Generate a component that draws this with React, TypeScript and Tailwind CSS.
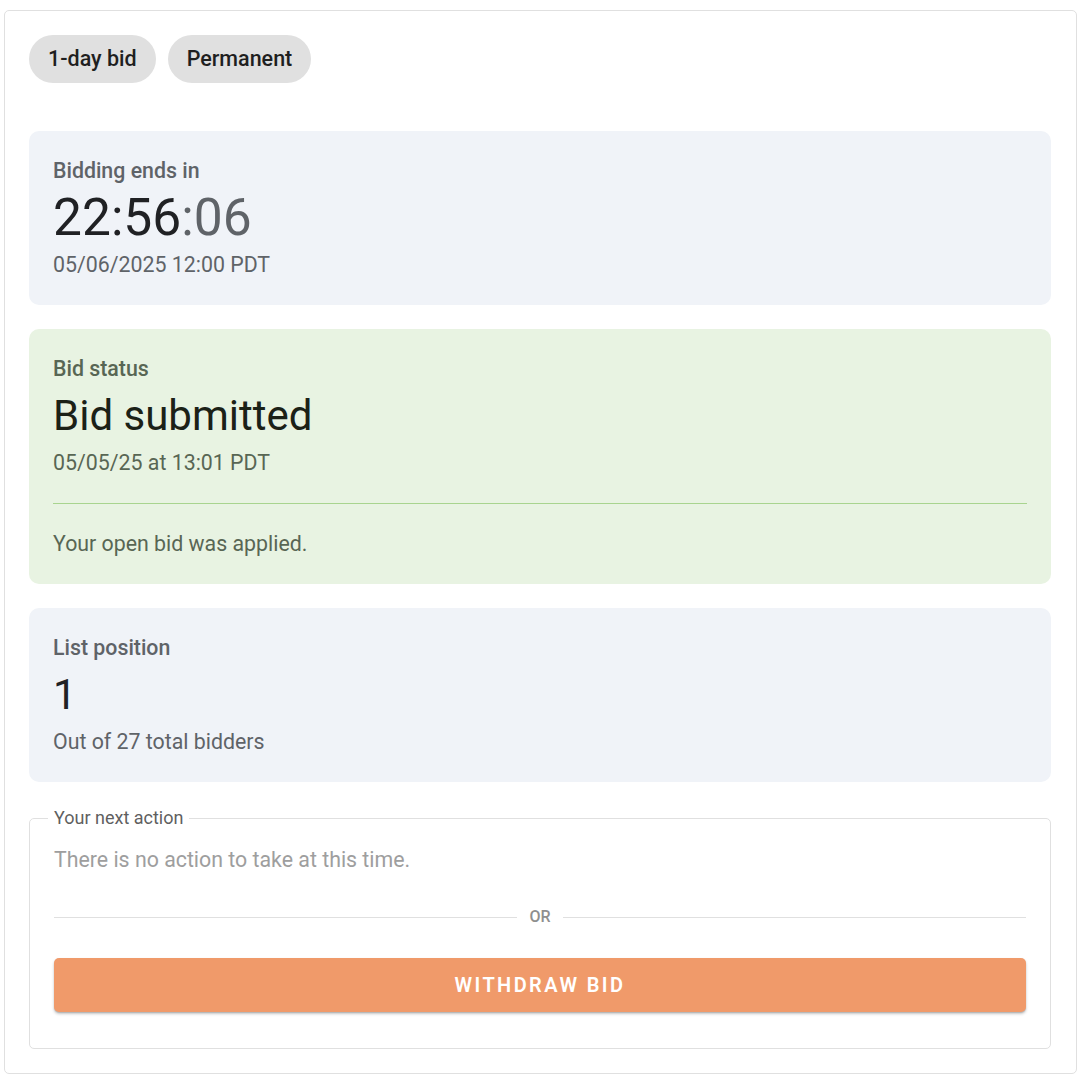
import React from 'react';

const font = { fontFamily: 'Roboto, "Noto Sans", Arial, sans-serif' };

function Chip({ label }: { label: string }) {
  return (
    <span className="inline-flex h-12 items-center rounded-full bg-[#e0e0e0] px-[19px] text-[21.5px] font-medium text-[#1f1f1f]">
      {label}
    </span>
  );
}

export default function App() {
  return (
    <div className="min-h-screen bg-white pt-[10px] px-[4px]" style={font}>
      <div className="rounded-[5px] border border-[#e0e0e0] pl-6 pr-[25px] py-6">
        <div className="flex gap-3">
          <Chip label="1-day bid" />
          <Chip label="Permanent" />
        </div>

        <div className="mt-12 flex flex-col gap-6">
          <section className="rounded-[10px] bg-[#f0f3f8] p-6">
            <div className="text-[21.33px] font-medium leading-[32px] text-[#5f6368]">Bidding ends in</div>
            <div className="text-[51.5px] leading-[62px] text-[#202124]">
              22:56<span className="text-[#5f6368]">:06</span>
            </div>
            <div className="text-[21.33px] leading-[32px] text-[#5f6368]">05/06/2025 12:00 PDT</div>
          </section>

          <section className="rounded-[10px] bg-[#e8f3e2] p-6">
            <div className="text-[21.33px] font-medium leading-[32px] text-[#586654]">Bid status</div>
            <div className="text-[42px] leading-[62px] text-[#1b2117]">Bid submitted</div>
            <div className="text-[21.33px] leading-[32px] text-[#586654]">05/05/25 at 13:01 PDT</div>
            <div className="my-6 h-px bg-[#a8d48f]" />
            <div className="text-[21.33px] leading-[32px] text-[#586654]">Your open bid was applied.</div>
          </section>

          <section className="rounded-[10px] bg-[#f0f3f8] p-6">
            <div className="text-[21.33px] font-medium leading-[32px] text-[#5f6368]">List position</div>
            <div className="text-[42px] leading-[62px] text-[#202124]">1</div>
            <div className="text-[21.33px] leading-[32px] text-[#5f6368]">Out of 27 total bidders</div>
          </section>

          <fieldset className="rounded-[5px] border border-[#e0e0e0] px-6 pb-[36px] pt-[14px]">
            <legend className="ml-[-6px] px-[6px] text-[18px] leading-[24px] text-[#5f5f5f]">Your next action</legend>
            <p className="text-[21.33px] leading-[32px] text-[#9e9e9e]">There is no action to take at this time.</p>
            <div className="my-[29px] flex h-6 items-center gap-3">
              <div className="h-px flex-1 bg-[#e0e0e0]" />
              <span className="text-[16px] font-medium text-[#8f8f8f]">OR</span>
              <div className="h-px flex-1 bg-[#e0e0e0]" />
            </div>
            <button className="flex h-[54px] w-full items-center justify-center rounded-[5px] bg-[#f09a6a] text-[20px] font-semibold tracking-[2.4px] text-white shadow-[0_2px_3px_rgba(0,0,0,0.22),0_1px_1px_rgba(0,0,0,0.12)]">
              WITHDRAW BID
            </button>
          </fieldset>
        </div>
      </div>
    </div>
  );
}
